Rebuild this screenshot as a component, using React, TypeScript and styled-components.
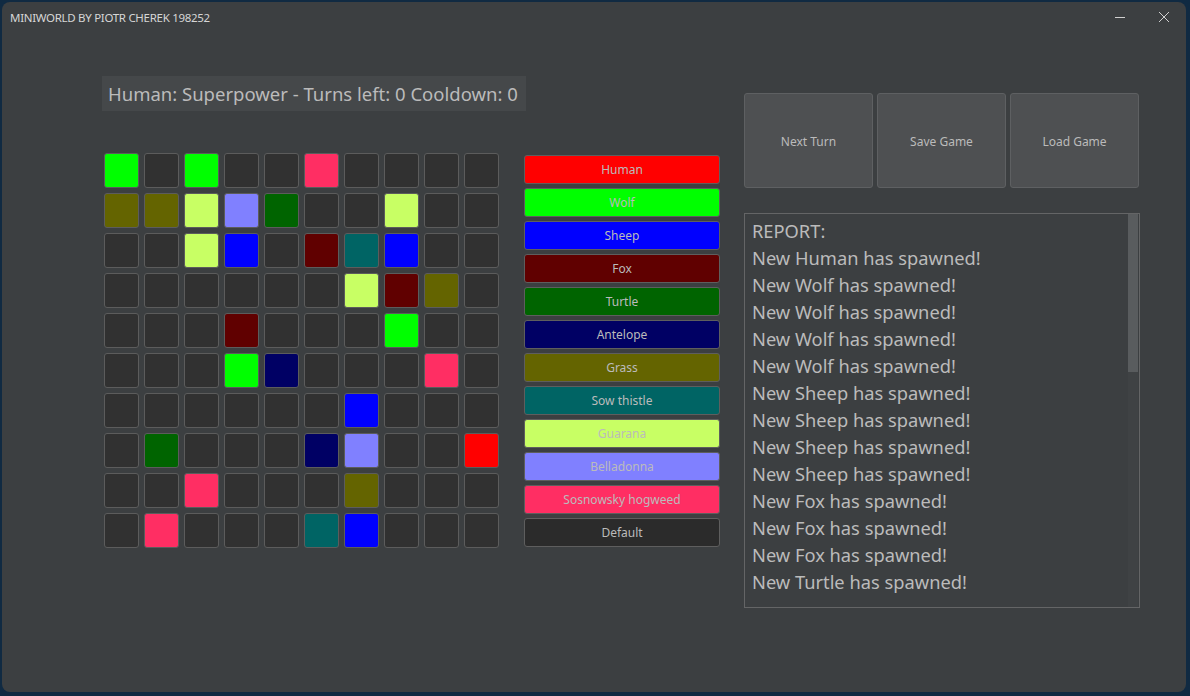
import styled, { createGlobalStyle } from 'styled-components';

const GlobalStyle = createGlobalStyle`
  html, body {
    margin: 0;
    padding: 0;
    background: #102a42;
    width: 1190px;
    height: 696px;
    overflow: hidden;
  }
  * {
    box-sizing: border-box;
  }
`;

const FONT = `"Noto Sans", "Open Sans", "DejaVu Sans", sans-serif`;

const COLORS: Record<string, string> = {
  D: '#313131',
  H: '#ff0000',
  W: '#00ff00',
  S: '#0000ff',
  F: '#600000',
  T: '#006400',
  A: '#000064',
  G: '#646400',
  X: '#006464',
  U: '#c8ff64',
  B: '#8080ff',
  P: '#ff2e63',
};

const BOARD = [
  'WDWDDPDDDD',
  'GGUBTDDUDD',
  'DDUSDFXSDD',
  'DDDDDDUFGD',
  'DDDFDDDWDD',
  'DDDWADDDPD',
  'DDDDDDSDDD',
  'DTDDDABDDH',
  'DDPDDDGDDD',
  'DPDDDXSDDD',
];

const LEGEND: Array<[string, string]> = [
  ['Human', 'H'],
  ['Wolf', 'W'],
  ['Sheep', 'S'],
  ['Fox', 'F'],
  ['Turtle', 'T'],
  ['Antelope', 'A'],
  ['Grass', 'G'],
  ['Sow thistle', 'X'],
  ['Guarana', 'U'],
  ['Belladonna', 'B'],
  ['Sosnowsky hogweed', 'P'],
  ['Default', 'D'],
];

const REPORT = [
  'REPORT:',
  'New Human has spawned!',
  'New Wolf has spawned!',
  'New Wolf has spawned!',
  'New Wolf has spawned!',
  'New Wolf has spawned!',
  'New Sheep has spawned!',
  'New Sheep has spawned!',
  'New Sheep has spawned!',
  'New Sheep has spawned!',
  'New Fox has spawned!',
  'New Fox has spawned!',
  'New Fox has spawned!',
  'New Turtle has spawned!',
];

const Window = styled.div`
  margin: 2px 0 0 2px;
  width: 1184px;
  height: 690px;
  background: #3c3f41;
  border-radius: 8px;
  display: flex;
  flex-direction: column;
  font-family: ${FONT};
  overflow: hidden;
`;

const TitleBar = styled.div`
  height: 30px;
  display: flex;
  align-items: center;
  padding-left: 8px;
  color: #d6d6d6;
  font-size: 11.5px;
  letter-spacing: -0.3px;
`;

const Title = styled.div`
  flex: 1;
`;

const WinButton = styled.div`
  width: 44px;
  height: 30px;
  display: flex;
  align-items: center;
  justify-content: center;
`;

const Main = styled.div`
  display: flex;
  padding: 44px 0 0 100px;
`;

const LeftColumn = styled.div`
  display: flex;
  flex-direction: column;
`;

const StatusLabel = styled.div`
  align-self: flex-start;
  height: 35px;
  width: 424px;
  padding-left: 6px;
  background: #45484a;
  color: #bbbbbb;
  font-size: 18.5px;
  display: flex;
  align-items: center;
  white-space: nowrap;
`;

const BoardRow = styled.div`
  display: flex;
  margin-top: 42px;
  padding-left: 2px;
`;

const Grid = styled.div`
  display: grid;
  grid-template-columns: repeat(10, 35px);
  grid-auto-rows: 35px;
  gap: 5px;
`;

const Cell = styled.div<{ $color: string }>`
  background: ${({ $color }) => $color};
  border: 1px solid #5c5c5c;
  border-radius: 3px;
`;

const Legend = styled.div`
  display: flex;
  flex-direction: column;
  gap: 4px;
  margin: 2px 0 0 25px;
  width: 196px;
`;

const LegendButton = styled.div<{ $color: string }>`
  height: 29px;
  background: ${({ $color }) => $color};
  border: 1px solid #5e5e5e;
  border-radius: 3px;
  color: #bbbbbb;
  font-size: 12px;
  display: flex;
  align-items: center;
  justify-content: center;
`;

const RightColumn = styled.div`
  display: flex;
  flex-direction: column;
  margin: 17px 0 0 24px;
  width: 396px;
`;

const ButtonRow = styled.div`
  display: flex;
  gap: 4px;
`;

const ActionButton = styled.div`
  width: 129px;
  height: 95px;
  padding-top: 2px;
  background: #4e5052;
  border: 1px solid #5e6062;
  border-radius: 3px;
  color: #bbbbbb;
  font-size: 12px;
  display: flex;
  align-items: center;
  justify-content: center;
`;

const ReportBox = styled.div`
  margin-top: 25px;
  height: 395px;
  border: 1px solid #646566;
  display: flex;
  overflow: hidden;
`;

const ReportText = styled.div`
  flex: 1;
  padding: 3px 0 0 7px;
  color: #bbbbbb;
  font-size: 18.3px;
  line-height: 27px;
  white-space: nowrap;
  overflow: hidden;
`;

const ScrollTrack = styled.div`
  width: 10px;
  background: #3f4244;
  margin-right: 1px;
`;

const ScrollThumb = styled.div`
  height: 158px;
  background: #595c5e;
`;

const App = () => (
  <>
    <GlobalStyle />
    <Window>
      <TitleBar>
        <Title>MINIWORLD BY PIOTR CHEREK 198252</Title>
        <WinButton>
          <svg width="12" height="12" viewBox="0 0 12 12">
            <path d="M1 6.5h10" stroke="#d0d0d0" strokeWidth="1" />
          </svg>
        </WinButton>
        <WinButton>
          <svg width="12" height="12" viewBox="0 0 12 12">
            <path d="M1 1l10 10M11 1L1 11" stroke="#d0d0d0" strokeWidth="1" />
          </svg>
        </WinButton>
      </TitleBar>
      <Main>
        <LeftColumn>
          <StatusLabel>Human: Superpower - Turns left: 0 Cooldown: 0</StatusLabel>
          <BoardRow>
            <Grid>
              {BOARD.map((row, r) =>
                row.split('').map((c, i) => <Cell key={`${r}-${i}`} $color={COLORS[c]} />),
              )}
            </Grid>
            <Legend>
              {LEGEND.map(([name, code]) => (
                <LegendButton key={name} $color={code === 'D' ? '#2b2b2b' : COLORS[code]}>
                  {name}
                </LegendButton>
              ))}
            </Legend>
          </BoardRow>
        </LeftColumn>
        <RightColumn>
          <ButtonRow>
            <ActionButton>Next Turn</ActionButton>
            <ActionButton>Save Game</ActionButton>
            <ActionButton>Load Game</ActionButton>
          </ButtonRow>
          <ReportBox>
            <ReportText>
              {REPORT.map((line, i) => (
                <div key={i}>{line}</div>
              ))}
            </ReportText>
            <ScrollTrack>
              <ScrollThumb />
            </ScrollTrack>
          </ReportBox>
        </RightColumn>
      </Main>
    </Window>
  </>
);

export default App;
